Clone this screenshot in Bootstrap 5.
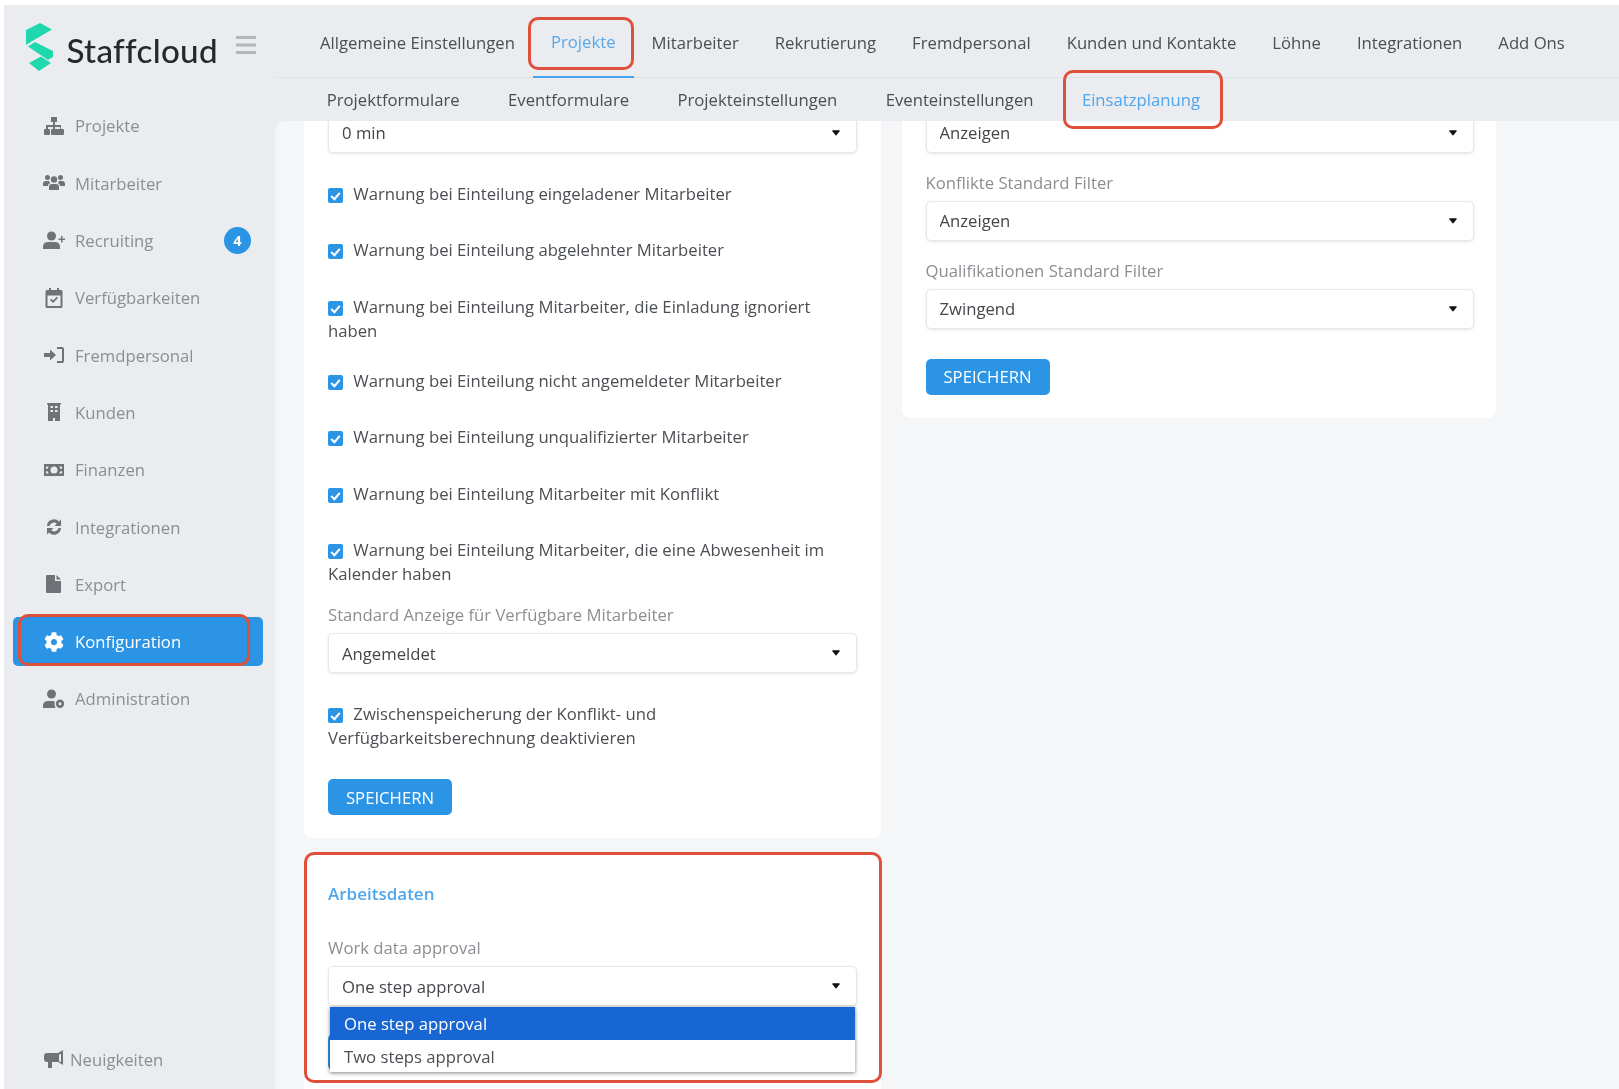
<!DOCTYPE html>
<html lang="de">
<head>
<meta charset="utf-8">
<title>Staffcloud</title>
<link href="https://cdn.jsdelivr.net/npm/bootstrap@5.3.0/dist/css/bootstrap.min.css" rel="stylesheet">
<style>
html,body{height:100%;margin:0;overflow:hidden;background:#fff}
body{font-family:"Open Sans","Liberation Sans",sans-serif;font-size:16.7px;color:#4b4e52}
.app-shell{position:relative;height:1089px;padding:5px 0 0 4px;display:flex;filter:blur(.6px)}
.side-col{width:271px;flex:none;background:#ebecf0;display:flex;flex-direction:column}
.brand-row{height:96.5px;padding:18px 0 0 21.5px;display:flex;align-items:flex-start}
.brand-name{font-family:Lato,"Liberation Sans",sans-serif;font-weight:500;font-size:33.2px;letter-spacing:.3px;line-height:54px;color:#26282b;margin-left:13px}
.menu-btn{margin:13px 0 0 18px}
.side-item{display:flex;align-items:center;height:49px;margin:0 12px 8.3px 9px;padding:0 12px 0 30px;border-radius:5px;color:#8b8e92;font-size:16.7px;text-decoration:none;position:relative}
.side-item svg{width:22px;height:20px;fill:#6f7276;flex:none;margin-right:10px}
.side-item.is-on{background:#2b94e5;color:#fff;font-weight:500}
.side-item.is-on svg{fill:#fff}
.count-dot{margin-left:auto;width:27px;height:27px;border-radius:50%;background:#2b94e5;color:#fff;font-size:14.5px;font-weight:700;display:flex;align-items:center;justify-content:center}
.news-row{margin-top:auto;margin-bottom:17px;padding-left:40px;display:flex;align-items:center;color:#8b8e92;font-size:16.7px}
.news-row svg{width:20px;height:19px;fill:#6f7276;margin-right:6px}
.main-col{flex:1;min-width:0;display:flex;flex-direction:column;background:#ebecf0}
.nav-top{height:73px;border-bottom:1px solid #dfe1e4;display:flex;padding-left:27px;flex:none}
.nav-top a{display:flex;align-items:center;height:73px;padding:2px 18px 0;color:#43464a;font-size:16.7px;text-decoration:none;white-space:nowrap}
.nav-top a.is-on{color:#57a9ec;border-bottom:2px solid #4aa3ea}
.nav-sub{height:43px;display:flex;padding-left:27.5px;flex:none}
.nav-sub a{display:flex;align-items:center;padding:0 24.2px;color:#85888c;font-size:16.7px;text-decoration:none;white-space:nowrap}
.nav-sub a.is-on{color:#4ea6ec}
.page-pane{flex:1;min-height:0;background:#f5f6f8;border-top-left-radius:10px;overflow:hidden;padding:0 0 0 29px}
.cols{display:flex;align-items:flex-start;gap:20.5px;margin-top:-8px}
.left-stack{width:577px;flex:none;display:flex;flex-direction:column;gap:16px}
.white-panel{background:#fff;border-radius:0 0 8px 8px;padding:0 24px 23px}
.panel-right{width:594px;flex:none;padding-right:22px}
.stack-last{border-radius:8px;padding-top:28px;height:300px;position:relative}
.pick{display:block;width:100%;height:40px;font:inherit;font-size:16.7px;color:#43464a;border:1px solid #e6e7ea;border-radius:5px;box-shadow:0 1px 3px rgba(0,0,0,.1);padding:0 13px;background-position:right 16px center;background-size:8px 6px;background-image:url("data:image/svg+xml,%3Csvg xmlns='http://www.w3.org/2000/svg' viewBox='0 0 9 6'%3E%3Cpath d='M1 0h7q1 0 .5 1L5 5.500q-.5.5-1 0L.5 1Q0 0 1 0z' fill='%23111'/%3E%3C/svg%3E")}
.pick:focus{box-shadow:0 1px 3px rgba(0,0,0,.1);border-color:#e6e7ea}
.gap-after-l{margin-bottom:29px}
.gap-after-m{margin-bottom:18px}
.field-label{display:block;color:#8b8e92;line-height:24px;margin:0 0 6px}
.chk-row{display:block;line-height:24px;margin:0 0 32.300px;color:#4b4e52}
.chk-first{margin-top:29px}
.chk-wrap{margin-bottom:26.6px}
.chk-tight{margin-bottom:17px}
.chk-btn{margin-bottom:29px}
.chk-row input{appearance:none;width:15px;height:15px;background:#2b94e5;border-radius:2px;margin:0 6px 0 0;vertical-align:-3px;background-image:url("data:image/svg+xml,%3Csvg xmlns='http://www.w3.org/2000/svg' viewBox='0 0 14 14'%3E%3Cpath d='M3 7.500l3 3 5-6' fill='none' stroke='%23fff' stroke-width='2'/%3E%3C/svg%3E")}
.save-btn{background:#2b94e5;border:0;color:#fff;font-size:16.7px;font-weight:400;height:36px;width:124px;padding:0;border-radius:5px;display:block}
.btn-behind{margin-top:28px}
.btn-top{margin-top:30px}
.sect-title{color:#4ea6ec;font-size:17px;font-weight:600;line-height:24px;margin:0 0 30px}
.opt-menu{position:absolute;left:26px;right:26px;top:153px;background:#fff;box-shadow:0 1px 4px rgba(0,0,0,.5);z-index:2}
.opt-menu div{height:32.500px;line-height:33px;padding-left:14px;color:#4b4e52}
.opt-menu div.is-hit{background:#1866d3;color:#fff}
.mark-box{position:absolute;border:3px solid #e04f3a;border-radius:10px;z-index:5;pointer-events:none}
.mb-a{left:528px;top:17px;width:106px;height:53px}
.mb-b{left:1063px;top:70px;width:160px;height:59px}
.mb-c{left:18px;top:614px;width:232px;height:52px}
.mb-d{left:304px;top:852px;width:578px;height:231px}
</style>
</head>
<body>
<div class="app-shell">
  <aside class="side-col">
    <div class="brand-row">
      <svg width="28" height="49" viewBox="0 0 28 49"><path fill="#1fd8ae" d="M0 7 14 0 26 6.500 8 17 0 22zM2 23.500 9 19 27 28v6L22 37zM3 40 15 33.500 25 40 13 48z"/></svg>
      <span class="brand-name">Staffcloud</span>
      <svg class="menu-btn" width="20" height="18" viewBox="0 0 20 18"><path fill="#b2b6b9" d="M0 0h20v3H0zM0 7.500h20v3H0zM0 15h20v3H0z"/></svg>
    </div>
    <a class="side-item"><svg viewBox="0 0 22 20"><path d="M8 1h6v5h-2v3h6v4h2a1 1 0 0 1 1 1v4a1 1 0 0 1-1 1h-5a1 1 0 0 1-1-1v-4a1 1 0 0 1 1-1h2v-2h-5v2h2a1 1 0 0 1 1 1v4a1 1 0 0 1-1 1H9a1 1 0 0 1-1-1v-4a1 1 0 0 1 1-1h1v-2H5v2h1a1 1 0 0 1 1 1v4a1 1 0 0 1-1 1H2a1 1 0 0 1-1-1v-4a1 1 0 0 1 1-1h1V9h7V6H8z"/></svg>Projekte</a>
    <a class="side-item"><svg viewBox="0 0 22 20"><circle cx="4.500" cy="4.500" r="2.500"/><circle cx="17.500" cy="4.500" r="2.500"/><circle cx="11" cy="6.500" r="3.200"/><path d="M0 11a3 3 0 0 1 3-3h3l1 2-2 2v1H0zM22 11a3 3 0 0 0-3-3h-3l-1 2 2 2v1h5zM6 14a3 3 0 0 1 3-3h4a3 3 0 0 1 3 3v3H6z"/></svg>Mitarbeiter</a>
    <a class="side-item"><svg viewBox="0 0 22 20"><circle cx="8.500" cy="5" r="4.500"/><path d="M0 18v-3a5 5 0 0 1 5-4h7a5 5 0 0 1 5 4v3zM18 5h1.500v2.500H22V9h-2.500v2.500H18V9h-2.500V7.500H18z"/></svg>Recruiting<span class="count-dot">4</span></a>
    <a class="side-item"><svg viewBox="0 0 22 20"><path fill-rule="evenodd" d="M6 0h2v2h6V0h2v2h2a1.500 1.500 0 0 1 1.500 1.500v15A1.500 1.500 0 0 1 18 20H4a1.500 1.500 0 0 1-1.500-1.500v-15A1.500 1.500 0 0 1 4 2h2zM4.500 7.500v10.500h13V7.500zM7 12l1.200-1.200 1.800 1.800 3.800-3.800L15 10l-5 5z"/></svg>Verfügbarkeiten</a>
    <a class="side-item"><svg viewBox="0 0 22 20"><path d="M1 8h6V4.500L13 10l-6 5.500V12H1zM14 2h5a2 2 0 0 1 2 2v12a2 2 0 0 1-2 2h-5v-2h5V4h-5z"/></svg>Fremdpersonal</a>
    <a class="side-item"><svg viewBox="0 0 22 20"><path fill-rule="evenodd" d="M4 1h14v1.500h-1V19h-5v-3h-2v3H5V2.500H4zM7.500 4v2h2.500V4zm4.500 0v2h2.500V4zM7.500 8v2h2.500V8zm4.500 0v2h2.500V8z"/></svg>Kunden</a>
    <a class="side-item"><svg viewBox="0 0 22 20"><path fill-rule="evenodd" d="M1 4h20v12H1zM11 6.500a3.500 3.500 0 1 0 0 7 3.500 3.500 0 0 0 0-7zM3 6.500V9a2.500 2.500 0 0 0 2.500-2.500zM19 13.500V11a2.500 2.500 0 0 0-2.500 2.500zM3 11v2.500h2.500A2.500 2.500 0 0 0 3 11zM19 9V6.500h-2.500A2.500 2.500 0 0 0 19 9z"/></svg>Finanzen</a>
    <a class="side-item"><svg viewBox="0 0 22 20"><path d="M4 9a7 7 0 0 1 12-4.500L18 2.500V9h-6.500l2.300-2.300A4.500 4.500 0 0 0 6.500 9zM18 11a7 7 0 0 1-12 4.500L4 17.500V11h6.500l-2.300 2.300a4.500 4.500 0 0 0 7.300-2.300z"/></svg>Integrationen</a>
    <a class="side-item"><svg viewBox="0 0 22 20"><path d="M4 1h8v6h6v11a1 1 0 0 1-1 1H4a1 1 0 0 1-1-1V2a1 1 0 0 1 1-1zM13.500 1 18 5.500h-4.500z"/></svg>Export</a>
    <a class="side-item is-on"><svg viewBox="0 0 512 512"><path d="M487.4 315.7l-42.6-24.6c4.300-23.200 4.300-47 0-70.200l42.6-24.600c4.900-2.800 7.100-8.600 5.500-14-11.100-35.600-30-67.800-54.700-94.600-3.800-4.100-10-5.100-14.800-2.300L380.800 110c-17.900-15.400-38.500-27.300-60.800-35.100V25.800c0-5.600-3.900-10.500-9.400-11.700-36.700-8.200-74.300-7.800-109.200 0-5.500 1.200-9.400 6.100-9.400 11.700V75c-22.200 7.900-42.800 19.800-60.800 35.100L88.700 85.500c-4.900-2.800-11-1.900-14.800 2.300-24.700 26.700-43.600 58.900-54.700 94.600-1.700 5.400.6 11.200 5.500 14L67.300 221c-4.300 23.200-4.300 47 0 70.200l-42.6 24.600c-4.900 2.800-7.100 8.600-5.500 14 11.100 35.600 30 67.800 54.700 94.600 3.800 4.100 10 5.100 14.800 2.300l42.600-24.600c17.900 15.400 38.500 27.300 60.800 35.100v49.200c0 5.600 3.900 10.500 9.400 11.700 36.700 8.200 74.300 7.800 109.200 0 5.500-1.200 9.400-6.100 9.400-11.700v-49.200c22.200-7.900 42.800-19.800 60.800-35.100l42.600 24.600c4.900 2.800 11 1.900 14.800-2.300 24.700-26.700 43.600-58.900 54.700-94.600 1.500-5.500-.7-11.300-5.600-14.100zM256 336c-44.100 0-80-35.900-80-80s35.900-80 80-80 80 35.900 80 80-35.900 80-80 80z"/></svg>Konfiguration</a>
    <a class="side-item"><svg viewBox="0 0 22 20"><circle cx="8.500" cy="5" r="4.500"/><path d="M0 19v-3a5 5 0 0 1 5-4h6.500v3.500l1 3.500zM17 10.500a4.200 4.200 0 1 1 0 8.400 4.200 4.200 0 0 1 0-8.400zm0 2.700a1.500 1.500 0 1 0 0 3 1.500 1.500 0 0 0 0-3z"/></svg>Administration</a>
    <div class="news-row"><svg viewBox="0 0 20 19"><path d="M19 0v15l-5-3H8v6H4v-6H3a3 3 0 0 1-3-3V6a3 3 0 0 1 3-3h11zM17 3.500 15 5v6l2 1.500z"/></svg>Neuigkeiten</div>
  </aside>
  <div class="main-col">
    <nav class="nav-top">
      <a>Allgemeine Einstellungen</a><a class="is-on">Projekte</a><a>Mitarbeiter</a><a>Rekrutierung</a><a>Fremdpersonal</a><a>Kunden und Kontakte</a><a>Löhne</a><a>Integrationen</a><a>Add Ons</a>
    </nav>
    <nav class="nav-sub">
      <a>Projektformulare</a><a>Eventformulare</a><a>Projekteinstellungen</a><a>Eventeinstellungen</a><a class="is-on">Einsatzplanung</a>
    </nav>
    <main class="page-pane">
      <div class="cols">
        <div class="left-stack">
          <section class="white-panel">
            <select class="form-select pick"><option>0 min</option></select>
            <label class="chk-row chk-first"><input type="checkbox" checked> Warnung bei Einteilung eingeladener Mitarbeiter</label>
            <label class="chk-row"><input type="checkbox" checked> Warnung bei Einteilung abgelehnter Mitarbeiter</label>
            <label class="chk-row chk-wrap"><input type="checkbox" checked> Warnung bei Einteilung Mitarbeiter, die Einladung ignoriert haben</label>
            <label class="chk-row"><input type="checkbox" checked> Warnung bei Einteilung nicht angemeldeter Mitarbeiter</label>
            <label class="chk-row"><input type="checkbox" checked> Warnung bei Einteilung unqualifizierter Mitarbeiter</label>
            <label class="chk-row"><input type="checkbox" checked> Warnung bei Einteilung Mitarbeiter mit Konflikt</label>
            <label class="chk-row chk-tight"><input type="checkbox" checked> Warnung bei Einteilung Mitarbeiter, die eine Abwesenheit im Kalender haben</label>
            <label class="field-label">Standard Anzeige für Verfügbare Mitarbeiter</label>
            <select class="form-select pick gap-after-l"><option>Angemeldet</option></select>
            <label class="chk-row chk-btn"><input type="checkbox" checked> Zwischenspeicherung der Konflikt- und Verfügbarkeitsberechnung deaktivieren</label>
            <button class="save-btn">SPEICHERN</button>
          </section>
          <section class="white-panel stack-last">
            <div class="sect-title">Arbeitsdaten</div>
            <label class="field-label">Work data approval</label>
            <select class="form-select pick"><option>One step approval</option></select>
            <button class="save-btn btn-behind" aria-label="Speichern"></button>
            <div class="opt-menu"><div class="is-hit">One step approval</div><div>Two steps approval</div></div>
          </section>
        </div>
        <section class="white-panel panel-right">
          <select class="form-select pick gap-after-m"><option>Anzeigen</option></select>
          <label class="field-label">Konflikte Standard Filter</label>
          <select class="form-select pick gap-after-m"><option>Anzeigen</option></select>
          <label class="field-label">Qualifikationen Standard Filter</label>
          <select class="form-select pick"><option>Zwingend</option></select>
          <button class="save-btn btn-top">SPEICHERN</button>
        </section>
      </div>
    </main>
  </div>
  <div class="mark-box mb-a"></div>
  <div class="mark-box mb-b"></div>
  <div class="mark-box mb-c"></div>
  <div class="mark-box mb-d"></div>
</div>
<script src="https://cdn.jsdelivr.net/npm/bootstrap@5.3.0/dist/js/bootstrap.bundle.min.js"></script>
</body>
</html>
